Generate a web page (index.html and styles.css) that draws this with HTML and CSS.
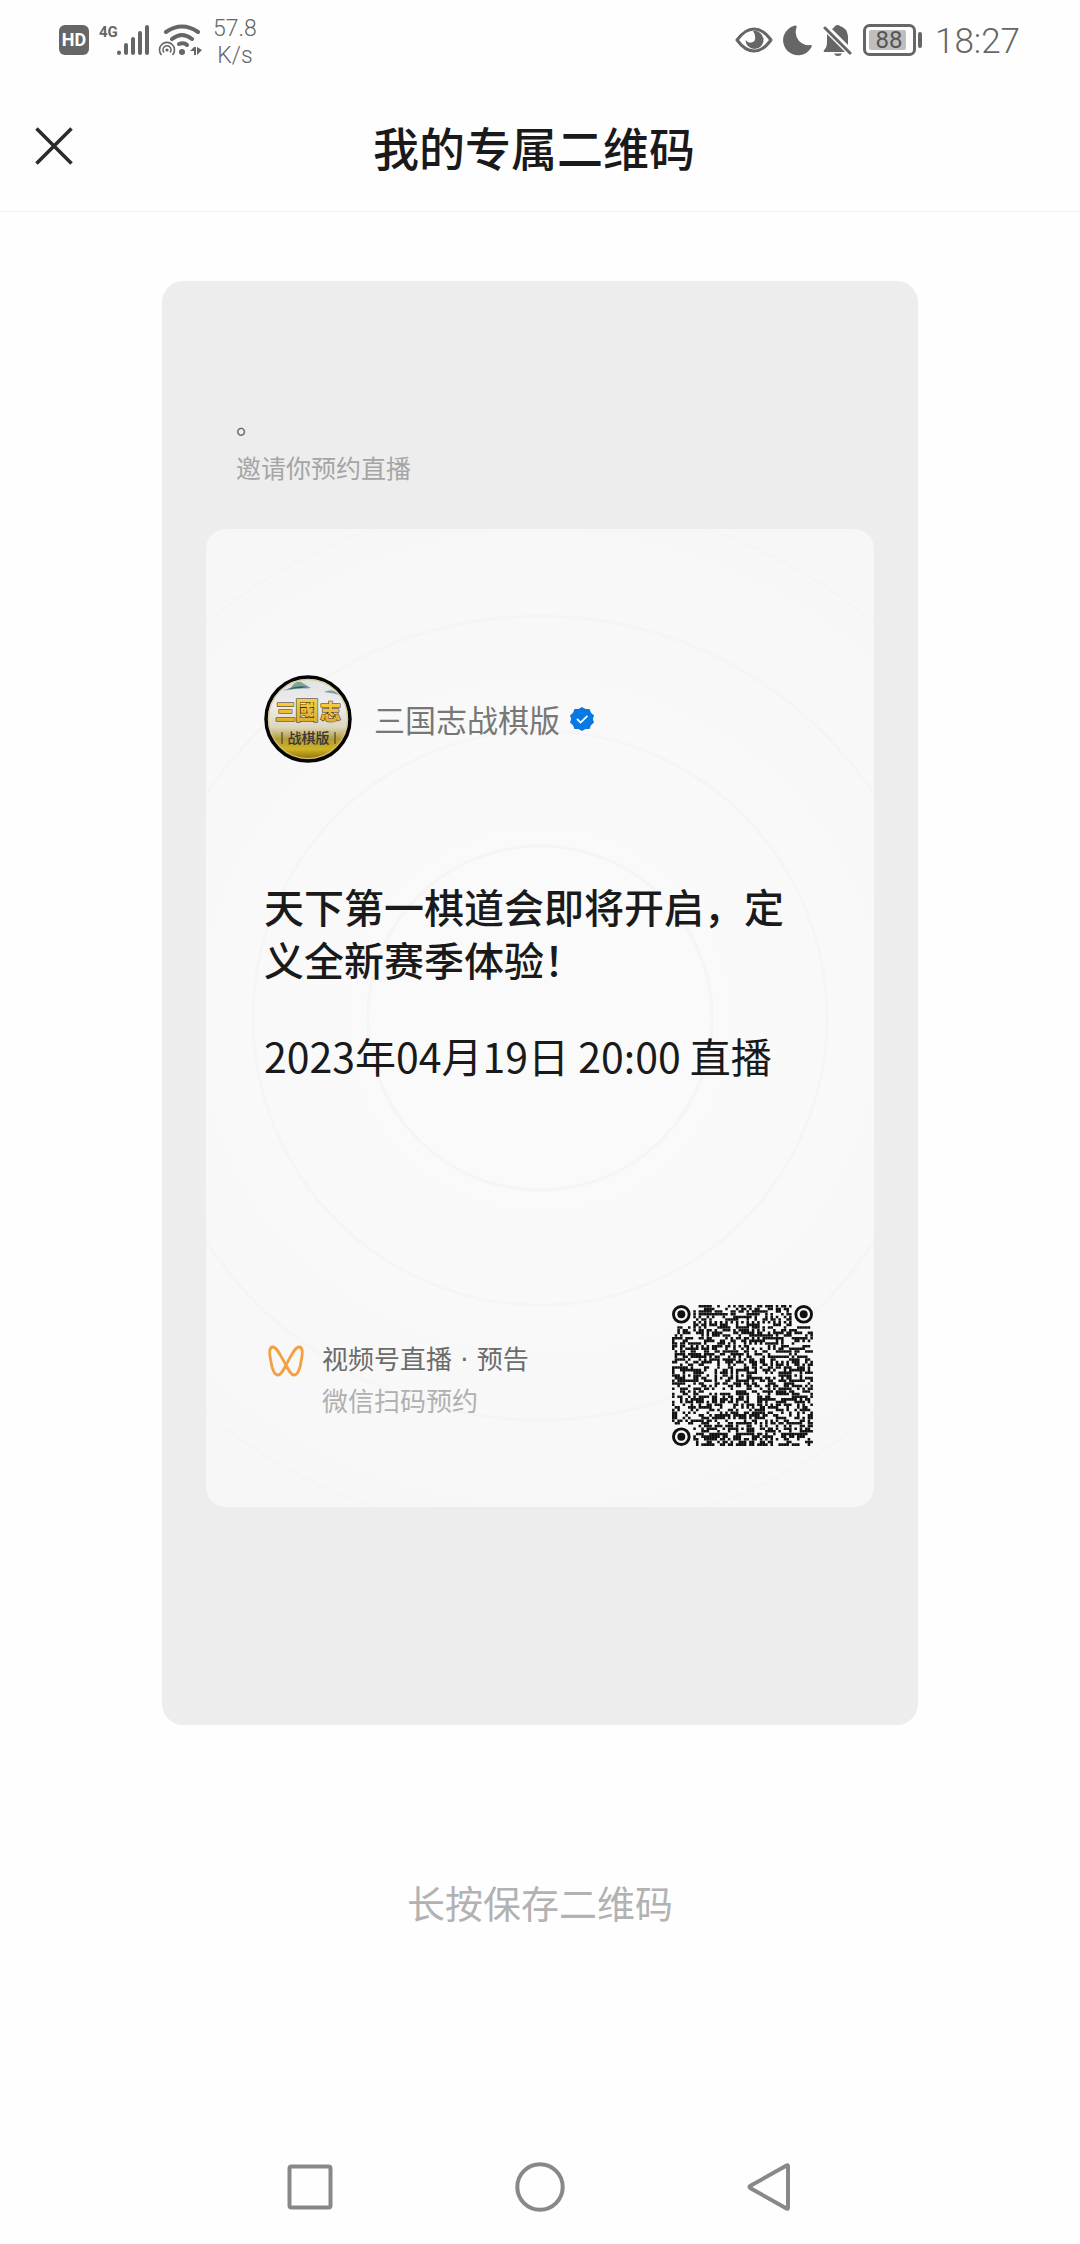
FILE: index.html
```html
<!DOCTYPE html>
<html lang="zh-CN">
<head>
<meta charset="utf-8">
<meta name="viewport" content="width=device-width, initial-scale=1">
<title>我的专属二维码</title>
<link rel="stylesheet" href="styles.css">
</head>
<body>
<div class="page">
  <div class="status">
    <div class="status-left">
      <svg class="hd" viewBox="0 0 30 30" width="30" height="30" aria-hidden="true"><rect width="30" height="30" rx="6" fill="#666"/><text x="15" y="21" text-anchor="middle" class="hd-text">HD</text></svg>
      <svg width="50" height="32" viewBox="0 0 50 32" aria-hidden="true"><text x="0" y="13" class="net-text">4G</text><g stroke="#666" stroke-width="4" stroke-linecap="round"><path d="M20 28.500v.5M27 21v8M34 15v14M41 9v20M48 3v26"/></g></svg>
      <svg class="wifi" width="44" height="32" viewBox="0 0 44 32" fill="none" stroke="#666" aria-hidden="true"><path d="M8 8Q24-3 40 8M14 15q10-8 20 0" stroke-width="4" stroke-linecap="round"/><path d="M21 20q5-2 8 1" stroke-width="4" stroke-linecap="round"/><circle cx="24" cy="28" r="3" fill="#666" stroke="none"/><path d="M3.500 31a7.500 7.500 0 1 1 11 0M6 28.500a4 4 0 1 1 6 0" stroke-width="1.600"/><circle cx="9" cy="26" r="1.600" fill="#666" stroke="none"/><path d="M32 27l4-4h2v8h-2v-4zM39 23v8l5-5z" fill="#666" stroke="none"/></svg>
      <div class="speed">57.8<br>K/s</div>
    </div>
    <div class="status-right">
      <svg width="38" height="26" viewBox="0 0 38 26" aria-hidden="true"><path d="M2 13Q10 2 19 2t17 11Q28 24 19 24T2 13Z" fill="none" stroke="#666" stroke-width="3" stroke-linejoin="round"/><path d="M18 4a9 9 0 1 1-7.500 9q4 5 9 1 2-5-1.500-10Z" fill="#666"/></svg>
      <svg width="30" height="31" viewBox="0 0 30 31" aria-hidden="true"><path d="M12 .6Q14 0 13.500 2.500 11 10 16 16q5 5 11.500 4 2-.2 1 2A15 15 0 1 1 12 .6Z" fill="#666"/></svg>
      <svg width="30" height="31" viewBox="0 0 30 31" aria-hidden="true"><path d="M2 3 27 28" stroke="#666" stroke-width="3" stroke-linecap="round"/><path d="M4 9 22 27H1q-1-1 1-3 2-2 2-8ZM9 4q2-1 3-3 3-2 5 0 7 2 8 10v9ZM11 28.500h8q-1 2.500-4 2.500t-4-2.500Z" fill="#666"/></svg>
      <svg width="60" height="32" viewBox="0 0 60 32" aria-hidden="true"><rect x="1.500" y="1.500" width="50" height="29" rx="5" fill="none" stroke="#666" stroke-width="3"/><rect x="6" y="6" width="37" height="20" rx="2" fill="#bebebe"/><rect x="55" y="8" width="4" height="16" rx="2" fill="#666"/><text x="26" y="24" text-anchor="middle" class="battery-text">88</text></svg>
      <time class="clock">18:27</time>
    </div>
  </div>

  <header class="header">
    <button class="close" type="button" aria-label="关闭"><svg width="38" height="38" viewBox="0 0 38 38"><path d="M1.500 1.500 36.500 36.500M36.500 1.500 1.500 36.500" stroke="#2b2b2b" stroke-width="3.600"/></svg></button>
    <h1 class="title">我的专属二维码</h1>
  </header>

  <main class="main">
    <section class="poster">
      <div class="invite">
        <p class="inviter">。</p>
        <p class="invite-text">邀请你预约直播</p>
      </div>
      <article class="ticket">
        <div class="account">
          <svg class="avatar" viewBox="0 0 88 88" width="88" height="88" role="img" aria-label="三国志战棋版">
            <defs><linearGradient id="sky" x1="0" y1="0" x2="0" y2="1"><stop offset="0" stop-color="#dfe3e0"/><stop offset=".35" stop-color="#eeedf0"/><stop offset=".6" stop-color="#dcd5bd"/><stop offset=".74" stop-color="#b39a3a"/><stop offset=".86" stop-color="#d0b424"/><stop offset="1" stop-color="#7c610d"/></linearGradient>
            <linearGradient id="gold" x1="0" y1="0" x2="0" y2="1"><stop offset="0" stop-color="#fbdc50"/><stop offset="1" stop-color="#dda526"/></linearGradient></defs>
            <circle cx="44" cy="44" r="42" fill="url(#sky)" stroke="#050505" stroke-width="3.500"/>
            <circle cx="44" cy="44" r="39.500" fill="none" stroke="#d7c879" stroke-width="1"/>
            <path d="M19 15q7-1 9-4 4-5 9-4l5 3 5 3q-8 1-14 0-8 3-14 2ZM60 17q6-3 10-1l6 4q-8-2-16-3Z" fill="#7fa29c"/>
            <path d="M24 14q10-4 20-2-10 2-20 2Z" fill="#2e625e"/>
            <text class="logo-side" x="11" y="44">三</text><text class="logo-mid" x="31" y="44">國</text><text class="logo-side" x="56" y="44">志</text>
            <path d="M18 57v12M71 57v12" stroke="#3b351e" stroke-width="1"/>
            <text class="logo-sub" x="44.500" y="68" text-anchor="middle">战棋版</text>
          </svg>
          <span class="account-name">三国志战棋版</span>
          <svg width="26" height="26" viewBox="0 0 26 26" aria-hidden="true"><path d="m13 1 3.500 2h4l1.500 3.800 3 2.700-1.200 3.500L25 16.500l-3 2.700-1.500 3.800h-4L13 25l-3.500-2h-4L4 19.200l-3-2.700L2.200 13 1 9.500l3-2.700L5.500 3h4Z" fill="#0a78e3"/><path d="m8 13 3.600 3.600 6.800-6.800" fill="none" stroke="#fff" stroke-width="1.800"/></svg>
        </div>
        <h2 class="event">天下第一棋道会即将开启，定义全新赛季体验！</h2>
        <p class="date">2023年04月19日 20:00 直播</p>
        <div class="source">
          <svg class="channels" width="36" height="32" viewBox="0 0 36 32" fill="none" stroke="#f2a044" stroke-width="2.800" stroke-linejoin="round" aria-hidden="true"><path d="M18 20C13 12 9 2 5 2 1 2 1 8 3 17c1 6 3 13 7 13 3 0 5-4 8-10 5-9 9-18 13-18s4 6 2 15c-1 6-3 13-7 13-3 0-5-4-8-10Z"/></svg>
          <div class="source-text"><p class="source-name">视频号直播 · 预告</p><p class="source-tip">微信扫码预约</p></div>
          <svg class="qr" id="qr" viewBox="0 0 53 53" width="141" height="141" role="img" aria-label="预约二维码"></svg>
        </div>
      </article>
    </section>
    <p class="hint">长按保存二维码</p>
  </main>

  <nav class="nav" aria-label="系统导航">
    <button type="button" aria-label="最近任务"><svg width="50" height="50" viewBox="0 0 50 50"><rect x="4.500" y="4.500" width="41" height="41" rx="2"/></svg></button>
    <button type="button" aria-label="主屏幕"><svg width="50" height="50" viewBox="0 0 50 50"><circle cx="25" cy="25" r="22.700"/></svg></button>
    <button type="button" aria-label="返回"><svg width="50" height="50" viewBox="0 0 50 50"><path d="M41.500 3.500Q43 2.500 43 4.500V45.500Q43 47.500 41.500 46.500L5.500 26.200Q3.500 25 5.500 23.800Z"/></svg></button>
  </nav>
</div>
<script src="qr.js"></script>
</body>
</html>
```
FILE: styles.css
```css
* { box-sizing: border-box; }
body {
  margin: 0;
  background: #fefefe;
  color: #1a1a1a;
  font-family: "Noto Sans CJK SC", sans-serif;
}
h1, h2, p { margin: 0; font-weight: 400; }
button { padding: 0; border: 0; background: none; }
svg { display: block; flex: none; }

.page { min-height: 100vh; display: flex; flex-direction: column; }

.status {
  height: 80px;
  padding: 0 60px 0 59px;
  display: flex;
  justify-content: space-between;
  align-items: center;
  color: #666;
  font-family: Roboto, sans-serif;
}
.status-left, .status-right { display: flex; align-items: center; gap: 10px; }
.wifi { margin: 0 1px 0 -1px; }
.speed { font-size: 23px; line-height: 27px; text-align: center; font-weight: 300; padding-top: 4px; }
.clock { font-size: 35px; line-height: 40px; padding: 4px 0 0 2px; font-weight: 300; }
.hd-text { font: 700 18px Roboto, sans-serif; fill: #fff; }
.net-text { font: 700 15px Roboto, sans-serif; fill: #666; }
.battery-text { font: 400 24px Roboto, sans-serif; fill: #555; }

.header {
  height: 132px;
  padding: 0 47px 0 35px;
  display: grid;
  grid-template-columns: 38px 1fr 38px;
  align-items: center;
  border-bottom: 1px solid #f3f3f3;
}
.title { font-size: 46px; line-height: 66px; font-weight: 500; text-align: center; }

.main { display: flex; flex-direction: column; align-items: center; padding-top: 69px; }
.poster {
  width: 70%;
  padding: 126px 44px 218px;
  border-radius: 21px;
  background: #ededed;
}
.invite { padding: 0 30px 41px; font-size: 26px; }
.inviter { line-height: 32px; color: #666; }
.invite-text { margin-top: 7px; font-size: 25px; line-height: 42px; color: #a5a5a5; }

.ticket {
  padding: 146px 58px 61px;
  border-radius: 20px;
  background:
    radial-gradient(circle at center,
      transparent 170px, #f5f5f5 171px, #f5f5f5 173px, transparent 174px,
      transparent 285px, #f5f5f5 286px, #f5f5f5 288px, transparent 289px,
      transparent 400px, #f5f5f5 401px, #f5f5f5 403px, transparent 404px,
      transparent 515px, #f5f5f5 516px, #f5f5f5 518px, transparent 519px),
    radial-gradient(circle at center, #fafafa 160px, #f7f7f7 520px);
}
.account { display: flex; align-items: center; }
.account-name { margin: 0 9px 0 22px; font-size: 31px; line-height: 44px; color: #777; }
.event { margin-top: 117px; font-size: 40px; line-height: 53px; font-weight: 500; }
.date { margin-top: 41px; font-size: 41px; line-height: 56px; }
.source { margin-top: 222px; display: flex; align-items: center; }
.channels { margin: 0 18px 30px 4px; }
.source-text { flex: 1; font-size: 26px; line-height: 40px; padding-top: 8px; }
.source-name { color: #6b6b6b; font-family: "DejaVu Sans", "Noto Sans CJK SC", sans-serif; }
.source-tip { color: #b0b0b0; }
.qr { margin-right: 3px; }

.logo-side, .logo-mid {
  font-family: "Noto Sans CJK TC", sans-serif;
  font-weight: 900;
  fill: url(#gold);
  stroke: #3a2704;
  stroke-width: 1;
  paint-order: stroke;
}
.logo-side { font-size: 21px; }
.logo-mid { font-size: 24px; }
.logo-sub { font-size: 14px; font-weight: 500; fill: #35352e; }

.hint { margin-top: 150px; font-size: 38px; line-height: 54px; color: #b2b2b2; }

.nav {
  margin-top: auto;
  padding: 0 195px 32px;
  display: grid;
  grid-template-columns: repeat(3, 1fr);
  justify-items: center;
}
.nav svg { fill: none; stroke: #888; stroke-width: 4; }
```
FILE: qr.js
```js
// Draws the reservation code: a 53 × 53 grid with round finder marks.
const N = 53;
const dark = Array.from({ length: N }, () => Array(N).fill(false));
let seed = 20230419;
const next = () => {
  seed ^= seed << 13;
  seed ^= seed >>> 17;
  seed ^= seed << 5;
  return (seed >>> 0) / 4294967296;
};
for (let y = 0; y < N; y++) {
  for (let x = 0; x < N; x++) dark[y][x] = next() < 0.52;
}
for (let i = 8; i < N - 8; i++) {
  dark[6][i] = i % 2 === 0;
  dark[i][6] = i % 2 === 0;
}
for (const [cx, cy] of [[26, 6], [6, 26], [26, 26], [46, 26], [26, 46], [46, 46]]) {
  for (let dy = -2; dy <= 2; dy++) {
    for (let dx = -2; dx <= 2; dx++) {
      dark[cy + dy][cx + dx] = Math.max(Math.abs(dx), Math.abs(dy)) !== 1;
    }
  }
}
const inFinder = (x, y) => (x < 8 && y < 8) || (x > N - 9 && y < 8) || (x < 8 && y > N - 9);
let path = "";
for (let y = 0; y < N; y++) {
  for (let x = 0; x < N; x++) {
    if (dark[y][x] && !inFinder(x, y)) path += `M${x} ${y}h.96v.96h-.96z`;
  }
}
const finder = (x, y) =>
  `<circle cx="${x}" cy="${y}" r="2.95" fill="none" stroke="#111" stroke-width="1.1"/><circle cx="${x}" cy="${y}" r="1.5" fill="#111"/>`;
document.getElementById("qr").innerHTML =
  `<path d="${path}" fill="#111"/>` + finder(3.5, 3.5) + finder(49.5, 3.5) + finder(3.5, 49.5);
```
